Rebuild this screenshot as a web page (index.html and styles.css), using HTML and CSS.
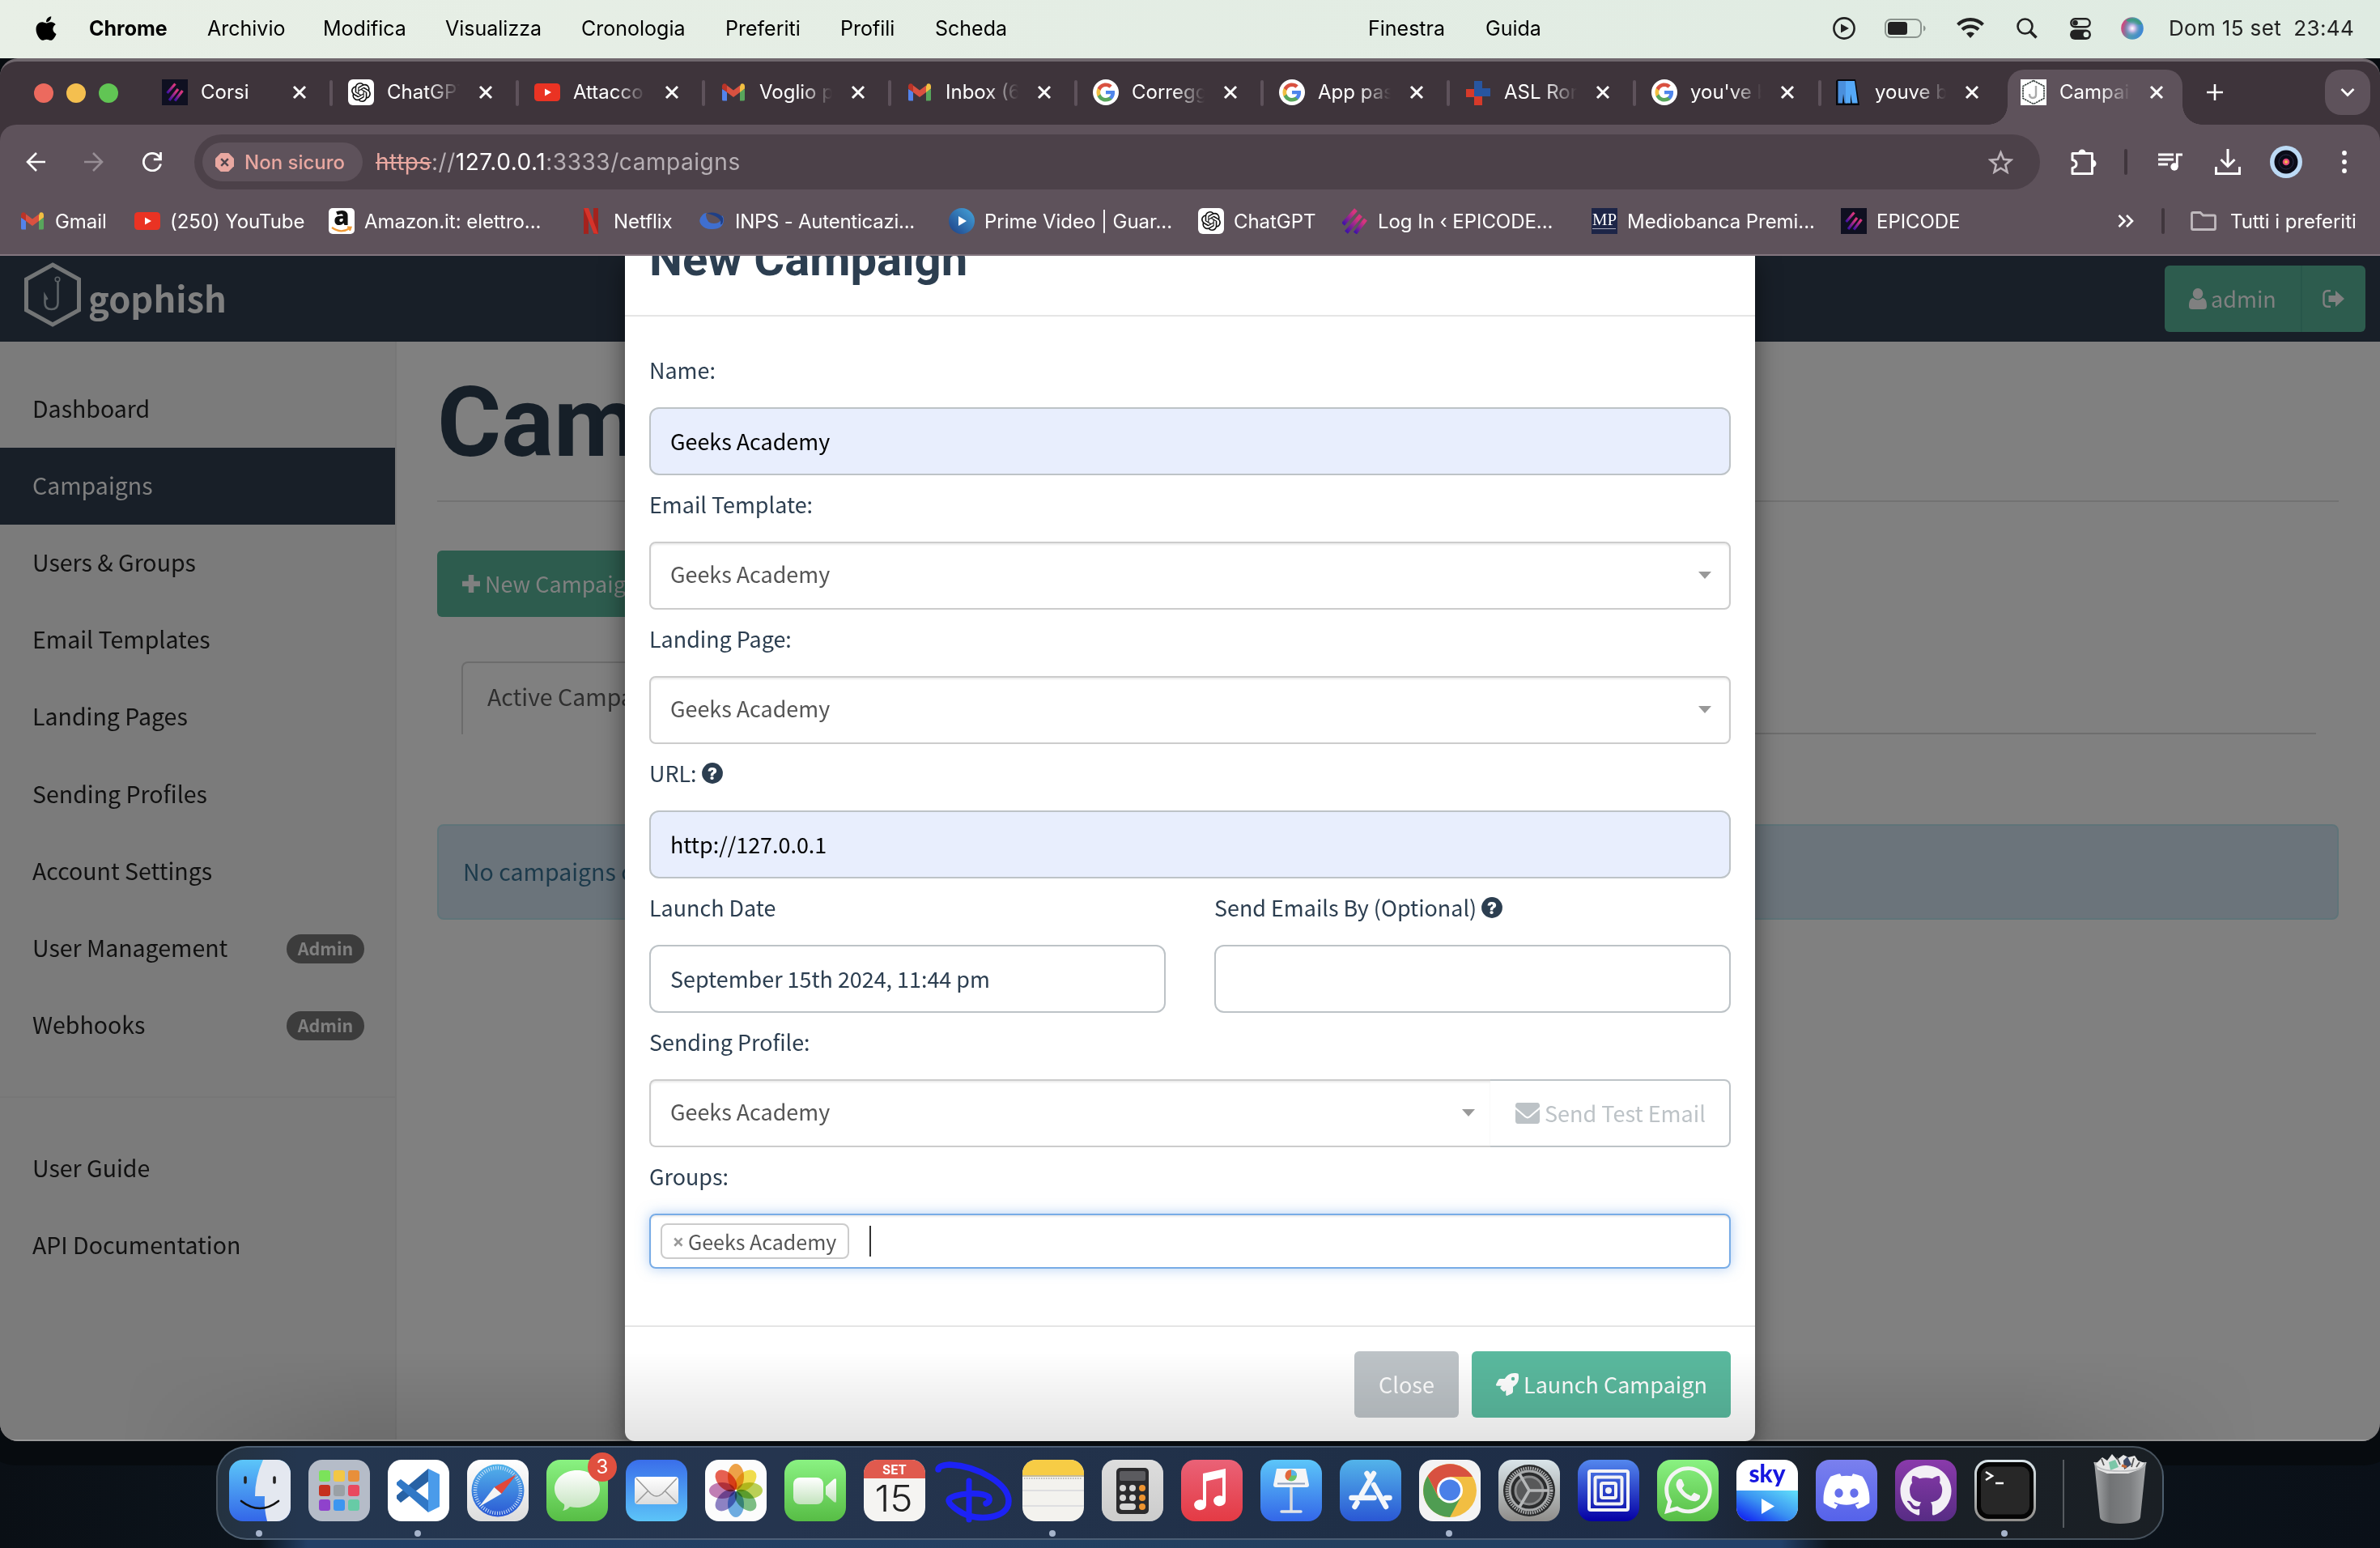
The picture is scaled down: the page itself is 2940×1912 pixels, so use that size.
FILE: index.html
```html
<!DOCTYPE html>
<html lang="it">
<head>
<meta charset="utf-8">
<title>Campaigns - Gophish</title>
<link rel="stylesheet" href="styles.css">
</head>
<body>
<svg class="defs" width="0" height="0" aria-hidden="true">
  <defs>
    <linearGradient id="epi" x1="1" y1="0" x2="0" y2="1"><stop offset=".2" stop-color="#d6357e"/><stop offset="1" stop-color="#3a10a8"/></linearGradient>
    <linearGradient id="green" x1="0" y1="0" x2="0" y2="1"><stop offset="0" stop-color="#8af282"/><stop offset="1" stop-color="#57bd45"/></linearGradient>
    <linearGradient id="blueUp" x1="0" y1="0" x2="0" y2="1"><stop offset="0" stop-color="#3a6eea"/><stop offset="1" stop-color="#5cc4f8"/></linearGradient>
    <linearGradient id="blueDown" x1="0" y1="0" x2="0" y2="1"><stop offset="0" stop-color="#5cc6f9"/><stop offset="1" stop-color="#3366e8"/></linearGradient>
    <linearGradient id="store" x1="0" y1="0" x2="0" y2="1"><stop offset="0" stop-color="#53b4ea"/><stop offset="1" stop-color="#2a57d4"/></linearGradient>
    <linearGradient id="red" x1="0" y1="0" x2="0" y2="1"><stop offset="0" stop-color="#ea6277"/><stop offset="1" stop-color="#e43a44"/></linearGradient>
    <linearGradient id="white" x1="0" y1="0" x2="0" y2="1"><stop offset="0" stop-color="#fff"/><stop offset="1" stop-color="#dcdcdc"/></linearGradient>
    <linearGradient id="glass" x1="0" y1="0" x2="0" y2="1"><stop offset="0" stop-color="#fff"/><stop offset="1" stop-color="#c3e3bd"/></linearGradient>
    <linearGradient id="navy" x1="0" y1="0" x2="0" y2="1"><stop offset="0" stop-color="#5488ee"/><stop offset="1" stop-color="#0500a4"/></linearGradient>
    <linearGradient id="steel" x1="0" y1="0" x2="0" y2="1"><stop offset="0" stop-color="#dae5ea"/><stop offset="1" stop-color="#8f8d8a"/></linearGradient>
    <linearGradient id="purple" x1="0" y1="0" x2="0" y2="1"><stop offset="0" stop-color="#8a3aab"/><stop offset="1" stop-color="#572c84"/></linearGradient>
    <linearGradient id="discord" x1="0" y1="0" x2="0" y2="1"><stop offset="0" stop-color="#7a80ee"/><stop offset="1" stop-color="#5562ea"/></linearGradient>
    <linearGradient id="skyg" x1="1" y1="0" x2="0" y2="1"><stop offset="0" stop-color="#62e2fa"/><stop offset=".5" stop-color="#3a92f2"/><stop offset="1" stop-color="#0a10f0"/></linearGradient>
    <linearGradient id="can" x1="0" y1="0" x2="1" y2="0"><stop offset="0" stop-color="#a5a7a9"/><stop offset=".3" stop-color="#717375"/><stop offset=".7" stop-color="#7e8082"/><stop offset="1" stop-color="#a2a4a6"/></linearGradient>
    <radialGradient id="siri"><stop offset="0" stop-color="#fff"/><stop offset=".35" stop-color="#c8b8e6"/><stop offset="1" stop-color="#3a8fb8" stop-opacity="0"/></radialGradient>
    <linearGradient id="siriBase" x1="0" y1=".3" x2="1" y2=".6"><stop offset="0" stop-color="#e23a78"/><stop offset=".5" stop-color="#4f9cb0"/><stop offset="1" stop-color="#3f86d8"/></linearGradient>
    <linearGradient id="prime" x1="1" y1="0" x2="0" y2="1"><stop offset="0" stop-color="#46a6dc"/><stop offset="1" stop-color="#1c3f86"/></linearGradient>
  </defs>
  <symbol id="i-x" viewBox="0 0 18 18"><path d="M2 2l14 14M16 2L2 16" stroke="#fff" stroke-width="3" fill="none"/></symbol>
  <symbol id="i-bars" viewBox="0 0 32 32"><g stroke="url(#epi)" stroke-width="3.2"><path d="M6.500 17L16.500 5.500"/><path d="M9 26L20 12"/><path d="M16 26.500L25.500 14"/></g></symbol>
  <symbol id="i-epi" viewBox="0 0 32 32"><path fill="#0f1021" d="M0 0h32v32H0z"/><use href="#i-bars" width="32" height="32"/></symbol>
  <symbol id="i-gpt" viewBox="0 0 32 32"><rect width="32" height="32" rx="6" fill="#fff"/><path transform="translate(4 4)" fill="#111" d="M22.2819 9.8211a5.9847 5.9847 0 0 0-.5157-4.9108 6.0462 6.0462 0 0 0-6.5098-2.9A6.0651 6.0651 0 0 0 4.9807 4.1818a5.9847 5.9847 0 0 0-3.9977 2.9 6.0462 6.0462 0 0 0 .7427 7.0966 5.98 5.98 0 0 0 .511 4.9107 6.051 6.051 0 0 0 6.5146 2.9001A5.9847 5.9847 0 0 0 13.2599 24a6.0557 6.0557 0 0 0 5.7718-4.2058 5.9894 5.9894 0 0 0 3.9977-2.9001 6.0557 6.0557 0 0 0-.7475-7.0729zm-9.022 12.6081a4.4755 4.4755 0 0 1-2.8764-1.0408l.1419-.0804 4.7783-2.7582a.7948.7948 0 0 0 .3927-.6813v-6.7369l2.02 1.1686a.071.071 0 0 1 .038.052v5.5826a4.504 4.504 0 0 1-4.4945 4.4944zm-9.6607-4.1254a4.4708 4.4708 0 0 1-.5346-3.0137l.142.0852 4.783 2.7582a.7712.7712 0 0 0 .7806 0l5.8428-3.3685v2.3324a.0804.0804 0 0 1-.0332.0615L9.74 19.9502a4.4992 4.4992 0 0 1-6.1408-1.6464zM2.3408 7.8956a4.485 4.485 0 0 1 2.3655-1.9728V11.6a.7664.7664 0 0 0 .3879.6765l5.8144 3.3543-2.0201 1.1685a.0757.0757 0 0 1-.071 0l-4.8303-2.7865A4.504 4.504 0 0 1 2.3408 7.872zm16.5963 3.8558L13.1038 8.364 15.1192 7.2a.0757.0757 0 0 1 .071 0l4.8303 2.7913a4.4944 4.4944 0 0 1-.6765 8.1042v-5.6772a.79.79 0 0 0-.407-.667zm2.0107-3.0231l-.142-.0852-4.7735-2.7818a.7759.7759 0 0 0-.7854 0L9.409 9.2297V6.8974a.0662.0662 0 0 1 .0284-.0615l4.8303-2.7866a4.4992 4.4992 0 0 1 6.6802 4.66zM8.3065 12.863l-2.02-1.1638a.0804.0804 0 0 1-.038-.0567V6.0742a4.4992 4.4992 0 0 1 7.3757-3.4537l-.142.0805L8.704 5.459a.7948.7948 0 0 0-.3927.6813zm1.0976-2.3654l2.602-1.4998 2.6069 1.4998v2.9994l-2.5974 1.4997-2.6067-1.4997Z"/></symbol>
  <symbol id="i-yt" viewBox="0 0 32 32"><rect y="5" width="32" height="22" rx="4.500" fill="#ea3323"/><path d="M13 11.500l8 4.500-8 4.500z" fill="#fff"/></symbol>
  <symbol id="i-gmail" viewBox="0 0 32 32"><path fill="#5383ec" d="M2 12v13a1.500 1.500 0 0 0 1.500 1.500H8V15z"/><path fill="#58a65c" d="M30 12v13a1.500 1.500 0 0 1-1.500 1.500H24V15z"/><path fill="#f2bf42" d="M24 9v7l6-4.500V8.500c0-3-3-4.200-5-2.600z"/><path fill="#d95140" d="M8 16V7.500l8 6 8-6V16l-8 6z"/><path fill="#b93428" d="M2 8.500v3L8 16V7.500L7 5.900C5 4.300 2 5.500 2 8.500z"/></symbol>
  <symbol id="i-google" viewBox="0 0 32 32"><circle cx="16" cy="16" r="16" fill="#fff"/><g transform="translate(3.400 3.400) scale(1.050)"><path fill="#4f86ec" d="M22.56 12.25c0-.78-.07-1.53-.2-2.25H12v4.26h5.92c-.26 1.37-1.04 2.53-2.21 3.31v2.77h3.57c2.08-1.92 3.28-4.74 3.28-8.09z"/><path fill="#58a65c" d="M12 23c2.97 0 5.46-.98 7.28-2.66l-3.57-2.77c-.98.66-2.23 1.06-3.71 1.06-2.86 0-5.29-1.93-6.16-4.53H2.18v2.84C3.99 20.53 7.7 23 12 23z"/><path fill="#f2bf42" d="M5.84 14.09c-.22-.66-.35-1.36-.35-2.09s.13-1.43.35-2.09V7.07H2.18C1.43 8.55 1 10.22 1 12s.43 3.45 1.18 4.93l2.85-2.22.81-.62z"/><path fill="#d95140" d="M12 5.38c1.62 0 3.06.56 4.21 1.64l3.15-3.15C17.45 2.09 14.97 1 12 1 7.700 1 3.990 3.470 2.180 7.070l3.660 2.840c.87-2.600 3.300-4.530 6.160-4.530z"/></g></symbol>
  <symbol id="i-help" viewBox="0 0 26 26"><circle cx="13" cy="13" r="12.900" fill="#2c3e50"/><text x="13" y="20.500" text-anchor="middle" font-family="Inter, sans-serif" font-weight="900" font-size="20" fill="#fff">?</text></symbol>
</svg>

<header class="menubar">
  <nav class="menus">
    <svg class="apple" viewBox="0 0 384 512"><path d="M318.7 268.7c-.2-36.7 16.4-64.4 50-84.8-18.8-26.9-47.2-41.7-84.7-44.6-35.5-2.8-74.3 20.7-88.5 20.7-15 0-49.4-19.7-76.4-19.7C63.3 141.200 4 184.800 4 273.500q0 39.300 14.400 81.200c12.800 36.700 59 126.700 107.200 125.200 25.200-.6 43-17.900 75.800-17.900 31.800 0 48.300 17.900 76.400 17.900 48.600-.7 90.400-82.500 102.600-119.300-65.200-30.700-61.700-90-61.700-91.900zm-56.600-164.200c27.300-32.400 24.800-61.900 24-72.500-24.100 1.400-52 16.400-67.900 34.900-17.500 19.800-27.800 44.300-25.600 71.900 26.100 2 49.900-11.400 69.500-34.300z"/></svg>
    <span class="app-name">Chrome</span><span>Archivio</span><span>Modifica</span><span>Visualizza</span><span>Cronologia</span><span>Preferiti</span><span>Profili</span><span>Scheda</span><span>Finestra</span><span>Guida</span>
  </nav>
  <div class="status">
    <svg viewBox="0 0 28 28" width="28" height="28"><circle cx="14" cy="14" r="12.600" fill="none" stroke="#222" stroke-width="2.600"/><path d="M10 8.500L20 14l-10 5.500z" fill="#222"/></svg>
    <svg viewBox="0 0 52 24" width="52" height="24"><rect x="1" y="1" width="44" height="22" rx="6.500" fill="none" stroke="#8b948e" stroke-width="2"/><rect x="4" y="4" width="24" height="16" rx="3.500" fill="#222"/><path d="M48 8.500c3.500 1 3.500 6 0 7z" fill="#8b948e"/></svg>
    <svg viewBox="0 0 34 26" width="34" height="26" fill="none" stroke="#222"><path d="M1.500 8.500a22 22 0 0 1 31 0" stroke-width="4.200"/><path d="M7 14.600a14.500 14.500 0 0 1 20 0" stroke-width="4.200"/><path d="M17 25l-5-5.500a7.500 7.500 0 0 1 10 0z" fill="#222" stroke="none"/></svg>
    <svg viewBox="0 0 26 26" width="26" height="26" fill="none" stroke="#222"><circle cx="10.500" cy="10.500" r="9" stroke-width="2.600"/><path d="M17 17l7.500 7.500" stroke-width="3.600"/></svg>
    <svg viewBox="0 0 26 27" width="26" height="27"><rect x="1.300" y="1.300" width="23.400" height="10" rx="5" fill="none" stroke="#222" stroke-width="2.400"/><circle cx="6.500" cy="6.300" r="3.300" fill="#222"/><rect y="14.500" width="26" height="12.500" rx="6.200" fill="#222"/><circle cx="20" cy="20.700" r="3.400" fill="#dfebe2"/></svg>
    <svg viewBox="0 0 28 28" width="28" height="28"><circle cx="14" cy="14" r="13.800" fill="url(#siriBase)"/><path d="M6 4a13.800 13.800 0 0 1 20 5q-10 2-20-5z" fill="#3f9a80"/><circle cx="14" cy="14" r="11" fill="url(#siri)"/></svg>
    <span class="clock">Dom 15 set&nbsp; 23:44</span>
  </div>
</header>

<main class="window">
  <div class="tabstrip">
    <div class="lights"><i class="red"></i><i class="amber"></i><i class="lime"></i></div>
    <div class="tabs">
      <div class="tab"><svg><use href="#i-epi"/></svg><span>Corsi</span><svg class="x"><use href="#i-x"/></svg></div>
      <div class="tab"><svg><use href="#i-gpt"/></svg><span>ChatGPT</span><svg class="x"><use href="#i-x"/></svg></div>
      <div class="tab"><svg><use href="#i-yt"/></svg><span>Attacco d</span><svg class="x"><use href="#i-x"/></svg></div>
      <div class="tab"><svg><use href="#i-gmail"/></svg><span>Voglio pr</span><svg class="x"><use href="#i-x"/></svg></div>
      <div class="tab"><svg><use href="#i-gmail"/></svg><span>Inbox (65)</span><svg class="x"><use href="#i-x"/></svg></div>
      <div class="tab"><svg><use href="#i-google"/></svg><span>Correggi</span><svg class="x"><use href="#i-x"/></svg></div>
      <div class="tab"><svg><use href="#i-google"/></svg><span>App pass</span><svg class="x"><use href="#i-x"/></svg></div>
      <div class="tab"><svg viewBox="0 0 32 32"><path d="M11 2h10v9h10v10H11z" fill="#2856a0"/><path d="M1 12h10v9h10v11H11v-10H1z" fill="#d63a2a"/></svg><span>ASL Roma</span><svg class="x"><use href="#i-x"/></svg></div>
      <div class="tab narrow"><svg><use href="#i-google"/></svg><span>you've be</span><svg class="x"><use href="#i-x"/></svg></div>
      <div class="tab narrow last"><svg viewBox="0 0 32 32"><path d="M2 0h22l5 32H0V2z" fill="#07080c"/><path d="M2.500 2h11v27.500h-3L9 18 8 29.500H2.500z" fill="#4a8fdc"/><path d="M12 2h11l3.800 27.500h-7L18 18v11.500h-6z" fill="#55a9f8"/></svg><span>youve be</span><svg class="x"><use href="#i-x"/></svg></div>
      <div class="tab active"><svg viewBox="0 0 32 32"><path d="M0 0h32v32H0z" fill="#fff"/><path d="M16 1.500L29 8.500v15L16 30.500 3 23.500v-15z" fill="none" stroke="#333c3a" stroke-width="1.600" stroke-dasharray="2.500 .7"/><path d="M19 8v11q0 4-4 4t-4-5" fill="none" stroke="#aaa" stroke-width="2.400"/></svg><span>Campaigns</span><svg class="x"><use href="#i-x"/></svg></div>
    </div>
    <svg class="plus" viewBox="0 0 22 22"><path d="M11 1v20M1 11h20" stroke="#fff" stroke-width="2.600"/></svg>
    <div class="tab-search"><svg viewBox="0 0 18 12" width="18" height="12"><path d="M1.500 2L9 9.500 16.500 2" fill="none" stroke="#fff" stroke-width="2.800"/></svg></div>
  </div>

  <div class="toolbar">
    <svg class="tb" viewBox="0 0 24 24"><path d="M24 12H2M13 1L2 12l11 11" fill="none" stroke="#fff" stroke-width="2.600"/></svg>
    <svg class="tb" viewBox="0 0 24 24"><path d="M0 12h22M11 1l11 11-11 11" fill="none" stroke="#978e95" stroke-width="2.600"/></svg>
    <svg class="tb" viewBox="0 0 24 24"><path d="M22.500 14.500a10.700 10.700 0 1 1-2.200-9.300l1.700 2.300" fill="none" stroke="#fff" stroke-width="2.800"/><path d="M22.500 0v8.800h-8.700" fill="none" stroke="#fff" stroke-width="2.800"/></svg>
    <div class="omnibox">
      <div class="chip"><svg viewBox="0 0 24 24" width="23" height="23"><path d="M7 0h10l7 7v10l-7 7H7l-7-7V7z" fill="#e9a8a1"/><path d="M7.500 7.500l9 9M16.500 7.500l-9 9" stroke="#51464e" stroke-width="2.600"/></svg><span>Non sicuro</span></div>
      <div class="url"><s>https</s>://<b>127.0.0.1</b>:3333/campaigns</div>
      <svg class="star" viewBox="0 0 32 30"><path d="M16 3l3.700 8.700 9.500.8-7.200 6.200 2.200 9.300-8.200-5-8.200 5 2.200-9.300-7.200-6.200 9.500-.8z" fill="none" stroke="#bbb3b9" stroke-width="2.700"/></svg>
    </div>
    <div class="actions">
      <svg viewBox="0 0 32 32" width="32" height="32"><path d="M2 5.500h24.500v25H2v-7q5-1 5-5t-5-5z" fill="none" stroke="#fff" stroke-width="3" stroke-linejoin="round"/><path d="M9.500 5a4.500 4.500 0 0 1 9 0zM27 13.500a4.500 4.500 0 0 1 0 9z" fill="#fff"/></svg>
      <i class="vr"></i>
      <svg viewBox="0 0 30 24" width="30" height="24"><path d="M0 3h19M0 9h19M0 15h12" stroke="#fff" stroke-width="2.800"/><path d="M23.300 18V3H30" fill="none" stroke="#fff" stroke-width="2.800"/><circle cx="20" cy="18" r="4.700" fill="#fff"/></svg>
      <svg viewBox="0 0 32 32" width="32" height="32"><path d="M16 0v21M7.500 13l8.500 8.500L24.500 13M1.500 22v8.500h29V22" fill="none" stroke="#fff" stroke-width="3"/></svg>
      <svg viewBox="0 0 40 40" width="40" height="40"><circle cx="20" cy="20" r="20" fill="#bcdaf5"/><circle cx="20" cy="20" r="14.500" fill="#0b0c18"/><circle cx="20" cy="20" r="9" fill="none" stroke="#2a2f48"/><circle cx="20" cy="20" r="4.300" fill="#e2477a"/><circle cx="20" cy="20" r="2" fill="#f2b84a"/></svg>
      <svg viewBox="0 0 6 28" width="6" height="28" fill="#fff"><circle cx="3" cy="3" r="2.900"/><circle cx="3" cy="14" r="2.900"/><circle cx="3" cy="25" r="2.900"/></svg>
    </div>
  </div>

  <div class="bookmarks">
    <a><svg><use href="#i-gmail"/></svg>Gmail</a>
    <a><svg><use href="#i-yt"/></svg>(250) YouTube</a>
    <a><svg viewBox="0 0 32 32"><rect width="32" height="32" rx="5" fill="#fff"/><text x="16" y="20.500" text-anchor="middle" font-family="Open Sans, sans-serif" font-weight="800" font-size="31" fill="#111">a</text><path d="M4 24q11 8 22 1M23 23.500l4.500.3-1.500 4" fill="none" stroke="#f09a35" stroke-width="2.200"/></svg>Amazon.it: elettro...</a>
    <a><svg viewBox="0 0 32 32"><path d="M7 0h6v32q-3-.5-6 0zM19 0h6v32q-3-.5-6 0z" fill="#a4221d"/><path d="M7 0h6l12 32q-3-.6-5.500-.5z" fill="#d6332a"/></svg>Netflix</a>
    <a class="tight"><svg viewBox="0 0 32 32"><path d="M3 9.500A14.500 10.500 0 0 0 16 26q14 0 14-12 0-3-2-5l-1 2q0 8-9 8T8 9q0-2 1-3-4 0-6 3.500z" fill="#3f6fd0"/><path d="M9 6.500q10-3 18 3 4 4 1 10l-2 1q3-9-17-14z" fill="#1f3f86"/></svg>INPS - Autenticazi...</a>
    <a><svg viewBox="0 0 32 32"><circle cx="16" cy="16" r="16" fill="url(#prime)"/><path d="M12 10l10 6-10 6z" fill="#fff"/></svg>Prime Video | Guar...</a>
    <a><svg><use href="#i-gpt"/></svg>ChatGPT</a>
    <a><svg viewBox="0 0 32 32"><g stroke="url(#epi)" stroke-width="5"><path d="M1 20L17 2"/><path d="M5 30L23 9"/><path d="M16 31L29 14"/></g></svg>Log In ‹ EPICODE...</a>
    <a><svg viewBox="0 0 32 32"><path d="M0 0h32v32H0z" fill="#1d2547"/><text x="16" y="21" text-anchor="middle" font-family="Liberation Serif, serif" font-size="20" fill="#fff" textLength="30" lengthAdjust="spacingAndGlyphs">MP</text><path d="M1 25.500h29" stroke="#aab" stroke-width="1"/></svg>Mediobanca Premi...</a>
    <a><svg><use href="#i-epi"/></svg>EPICODE</a>
    <svg class="more" viewBox="0 0 20 16"><path d="M1.500 1l7 7-7 7M11 1l7 7-7 7" fill="none" stroke="#fff" stroke-width="2.600"/></svg>
    <i class="vr"></i>
    <a><svg viewBox="0 0 32 32"><path d="M1.500 7q0-1.500 1.500-1.500h9l3.500 3.500H29q1.500 0 1.500 1.500V25q0 1.500-1.500 1.500H3q-1.500 0-1.500-1.500z" fill="none" stroke="#c0babe" stroke-width="2.800"/></svg>Tutti i preferiti</a>
  </div>

  <section class="page">
    <div class="navbar">
      <div class="brand">
        <svg viewBox="0 0 70 80" width="70" height="80" fill="none"><path d="M35 3L67.500 21v38L35 77 2.500 59V21z" stroke="#737576" stroke-width="5"/><circle cx="41" cy="21" r="2.800" stroke="#5d6367" stroke-width="1.600"/><path d="M41.500 24v26q0 8-8 8t-8-8V41l3 5" stroke="#5d6367" stroke-width="2.600"/></svg>
        <span>gophish</span>
      </div>
      <div class="account">
        <div class="btn-user"><svg viewBox="0 0 22 26" width="22" height="26"><path d="M11 0a6.300 6.800 0 0 1 0 13.600A6.300 6.800 0 0 1 11 0zM5 12q6 5 12 0c4 1 5 5 5 10 0 3-1.500 4-4 4H4c-2.500 0-4-1-4-4 0-5 1-9 5-10z" fill="#808080"/></svg>admin</div>
        <div class="btn-out"><svg viewBox="0 0 27 22" width="27" height="22"><path d="M10 1.300H6A4.500 4.500 0 0 0 1.500 6v10A4.500 4.500 0 0 0 6 20.700h4" fill="none" stroke="#808080" stroke-width="2.400"/><path d="M16 1l11 10-11 10v-6H7.500V7H16z" fill="#808080"/></svg></div>
      </div>
    </div>
    <div class="body">
      <aside class="sidebar">
        <a>Dashboard</a><a class="on">Campaigns</a><a>Users &amp; Groups</a><a>Email Templates</a><a>Landing Pages</a><a>Sending Profiles</a><a>Account Settings</a><a>User Management<b>Admin</b></a><a>Webhooks<b>Admin</b></a>
        <hr>
        <a>User Guide</a><a>API Documentation</a>
      </aside>
      <div class="content">
        <h1>Campaigns</h1>
        <div class="new-btn"><svg viewBox="0 0 24 24" width="24" height="24"><path d="M12 1v22M1 12h22" stroke="#808080" stroke-width="6.500"/></svg>New Campaign</div>
        <div class="nav-tabs"><span>Active Campaigns</span></div>
        <div class="alert">No campaigns created yet. Let's create one!</div>
      </div>
    </div>

    <div class="modal">
      <h4>New Campaign</h4>
      <form class="form">
        <label>Name:</label>
        <div class="input filled">Geeks Academy</div>
        <label>Email Template:</label>
        <div class="input select">Geeks Academy<i class="caret"></i></div>
        <label>Landing Page:</label>
        <div class="input select">Geeks Academy<i class="caret"></i></div>
        <label>URL: <svg><use href="#i-help"/></svg></label>
        <div class="input filled">http://127.0.0.1</div>
        <div class="cols">
          <div><label>Launch Date</label><div class="input">September 15th 2024, 11:44 pm</div></div>
          <div><label>Send Emails By (Optional) <svg><use href="#i-help"/></svg></label><div class="input"></div></div>
        </div>
        <label>Sending Profile:</label>
        <div class="group">
          <div class="input select joined">Geeks Academy<i class="caret"></i></div>
          <div class="test"><svg viewBox="0 64 512 384" width="30" height="26" preserveAspectRatio="none"><path fill="#bdc3c7" d="M502.3 190.8c3.9-3.1 9.7-.2 9.7 4.7V400c0 26.500-21.500 48-48 48H48c-26.500 0-48-21.500-48-48V195.600c0-5 5.700-7.800 9.700-4.700 22.400 17.400 52.100 39.500 154.100 113.600 21.100 15.400 56.700 47.800 92.200 47.600 35.700.3 72-32.800 92.300-47.600 102-74.100 131.600-96.300 154-113.700zM256 320c23.200.4 56.600-29.200 73.400-41.400 132.700-96.300 142.800-104.700 173.400-128.700 5.800-4.500 9.200-11.500 9.200-18.900v-19c0-26.500-21.500-48-48-48H48c-26.500 0-48 21.500-48 48v19c0 7.400 3.400 14.300 9.200 18.900 30.600 23.900 40.700 32.400 173.400 128.700 16.800 12.200 50.200 41.800 73.400 41.400z"/></svg>Send Test Email</div>
        </div>
        <label>Groups:</label>
        <div class="multi"><span class="tag"><b>×</b>Geeks Academy</span><i class="cursor"></i></div>
      </form>
      <div class="footer">
        <div class="close">Close</div>
        <div class="launch"><svg viewBox="0 0 512 512" width="28" height="28"><path fill="#fff" d="M505.120 19.094c-1.189-5.531-6.658-11-12.207-12.188C460.716 0 435.507 0 410.407 0 307.175 0 245.269 55.203 199.052 128H94.838c-16.348.016-35.557 11.875-42.887 26.484L2.516 253.297A28.400 28.400 0 0 0 0 264a24 24 0 0 0 24 24h103.816l-22.474 22.469c-11.365 11.361-12.996 32.258 0 45.250l50.904 50.906c11.156 11.188 32.156 13.156 45.277 0l22.475-22.469V488a24 24 0 0 0 24 24 28.560 28.560 0 0 0 10.707-2.516l98.728-49.391c14.629-7.297 26.508-26.500 26.508-42.859V312.797c72.598-46.313 128.035-108.406 128.035-211.094C512.075 76.500 512.075 51.297 505.120 19.094ZM384.040 168A40 40 0 1 1 424.050 128 40 40 0 0 1 384.040 168Z"/></svg>Launch Campaign</div>
      </div>
    </div>
    <div class="dock-shade"></div>
  </section>
</main>

<footer class="desk">
  <div class="dock">
    <div class="app run"><svg viewBox="0 0 76 76"><rect width="76" height="76" rx="17" fill="url(#blueDown)"/><path d="M42 0Q32 22 32 45h12q-1 16 3 31h12a17 17 0 0 0 17-17V17A17 17 0 0 0 59 0z" fill="#e4e8f0"/><path d="M20 22v6M56 22v6" stroke="#222" stroke-width="3.600" stroke-linecap="round"/><path d="M15 51q23 18 46 0" fill="none" stroke="#111" stroke-width="2.600" stroke-linecap="round"/></svg></div>
    <div class="app"><svg viewBox="0 0 76 76"><rect width="76" height="76" rx="17" fill="#b5bcc8"/><g><rect x="13" y="13" width="14" height="14" rx="3" fill="#7be35a"/><rect x="31" y="13" width="14" height="14" rx="3" fill="#f3c745"/><rect x="49" y="13" width="14" height="14" rx="3" fill="#e88f3a"/><rect x="13" y="31" width="14" height="14" rx="3" fill="#c5301f"/><rect x="31" y="31" width="14" height="14" rx="3" fill="#9aa0a5"/><rect x="49" y="31" width="14" height="14" rx="3" fill="#e9495f"/><rect x="13" y="49" width="14" height="14" rx="3" fill="#8f42cc"/><rect x="31" y="49" width="14" height="14" rx="3" fill="#3c96f0"/><rect x="49" y="49" width="14" height="14" rx="3" fill="#67cba6"/></g></svg></div>
    <div class="app run"><svg viewBox="0 0 76 76"><rect width="76" height="76" rx="17" fill="#fff"/><path d="M50 11v16L16 53l-5-5v-4z" fill="#2862a5"/><path d="M16 24l34 26v15L11 31v-3z" fill="#3178c6"/><path d="M50 11l14 7v40l-14 7z" fill="#4a9bea"/></svg></div>
    <div class="app"><svg viewBox="0 0 76 76"><rect width="76" height="76" rx="17" fill="url(#white)"/><circle cx="38" cy="38" r="32.500" fill="url(#store)"/><circle cx="38" cy="38" r="28" fill="none" stroke="#cfe4f8" stroke-width="4.500" stroke-dasharray="1 1.930"/><path d="M61 18L33.500 34l9 8z" fill="#e1483a"/><path d="M15 58l18.500-24 9 8z" fill="#f4f4f4"/></svg></div>
    <div class="app"><svg viewBox="0 0 76 76"><rect width="76" height="76" rx="17" fill="url(#green)"/><path d="M38 13c16 0 28 10 28 23S54 59 38 59q-5 0-9-1-3 4-9 5 3-4 2-8C14 50 10 43 10 36c0-13 12-23 28-23z" fill="url(#glass)"/></svg><em>3</em></div>
    <div class="app"><svg viewBox="0 0 76 76"><rect width="76" height="76" rx="17" fill="url(#blueUp)"/><rect x="11" y="21" width="54" height="34" rx="4" fill="url(#white)"/><path d="M13 53l15-15M63 53L48 38M13 23l18 19q7 6 14 0l18-19" fill="none" stroke="#999" stroke-width="1.500"/></svg></div>
    <div class="app"><svg viewBox="0 0 76 76"><rect width="76" height="76" rx="17" fill="#fcfcfc"/><g class="petals"><ellipse cx="38" cy="21" rx="10" ry="16" fill="#ef9a35"/><ellipse cx="38" cy="21" rx="10" ry="16" fill="#f2dc3a" transform="rotate(45 38 38)"/><ellipse cx="38" cy="21" rx="10" ry="16" fill="#b5cf45" transform="rotate(90 38 38)"/><ellipse cx="38" cy="21" rx="10" ry="16" fill="#6fb878" transform="rotate(135 38 38)"/><ellipse cx="38" cy="21" rx="10" ry="16" fill="#5fa5e0" transform="rotate(180 38 38)"/><ellipse cx="38" cy="21" rx="10" ry="16" fill="#8376c0" transform="rotate(225 38 38)"/><ellipse cx="38" cy="21" rx="10" ry="16" fill="#bd72ae" transform="rotate(270 38 38)"/><ellipse cx="38" cy="21" rx="10" ry="16" fill="#e7503f" transform="rotate(315 38 38)"/></g></svg></div>
    <div class="app"><svg viewBox="0 0 76 76"><rect width="76" height="76" rx="17" fill="url(#green)"/><rect x="11" y="22" width="37" height="33" rx="8" fill="url(#glass)"/><path d="M51 33l10-9q3-2 3 1v26q0 3-3 1l-10-9z" fill="url(#glass)"/></svg></div>
    <div class="app"><svg viewBox="0 0 76 76"><rect width="76" height="76" rx="17" fill="#f5f4f2"/><path d="M0 23v-6A17 17 0 0 1 17 0h42a17 17 0 0 1 17 17v6z" fill="#e05a4e"/><text x="38" y="18" text-anchor="middle" font-family="Inter, sans-serif" font-weight="700" font-size="15.500" fill="#fff">SET</text><text x="37" y="64" text-anchor="middle" font-family="Inter, sans-serif" font-weight="300" font-size="45" fill="#222" textLength="47" lengthAdjust="spacingAndGlyphs">15</text></svg></div>
    <div class="app"><svg viewBox="0 0 76 76"><g fill="none" stroke="#1c22f5" stroke-linecap="round"><path d="M-6 12Q-6 7 8 6c36 2 73 24 73 45 0 22-38 25-57 15Q7 56 7 50c1-9 50-12 50-2q1 4-4 6" stroke-width="7.500"/><path d="M32 26v48" stroke-width="7"/></g></svg></div>
    <div class="app run"><svg viewBox="0 0 76 76"><rect width="76" height="76" rx="17" fill="#f3f2ee"/><path d="M0 19v-2A17 17 0 0 1 17 0h42a17 17 0 0 1 17 17v2z" fill="#f7cc45"/><path d="M0 20h76" stroke="#b5a67a" stroke-width="1.500"/><path d="M2 23h72" stroke="#bbb" stroke-width="2" stroke-dasharray="1.500 1.500"/><path d="M0 38h76M0 57h76" stroke="#d8d7dc" stroke-width="1.600"/></svg></div>
    <div class="app"><svg viewBox="0 0 76 76"><rect width="76" height="76" rx="17" fill="url(#white)"/><rect width="76" height="76" rx="17" fill="#bbb" opacity=".5"/><rect x="18" y="10" width="40" height="57" rx="5" fill="#2b2b2e"/><rect x="22" y="14" width="32" height="12" rx="2" fill="#5b5b5f"/><g fill="#d6d6d6"><circle cx="26" cy="35" r="4"/><circle cx="38" cy="35" r="4"/><circle cx="26" cy="47" r="4"/><circle cx="38" cy="47" r="4"/><rect x="22" y="54" width="20" height="8" rx="4"/></g><g fill="#ee9430"><circle cx="50" cy="35" r="4"/><circle cx="50" cy="47" r="4"/><circle cx="50" cy="58" r="4"/></g></svg></div>
    <div class="app"><svg viewBox="0 0 76 76"><rect width="76" height="76" rx="17" fill="url(#red)"/><path d="M27 17l28-6v40a7.500 6.500 0 1 1-4-6V22l-20 4.500V56a7.500 6.500 0 1 1-4-6z" fill="#fff"/></svg></div>
    <div class="app"><svg viewBox="0 0 76 76"><rect width="76" height="76" rx="17" fill="url(#blueDown)"/><path d="M20 11h36l4 20q0 3-3 3H19q-3 0-3-3z" fill="#f4f5f6"/><path d="M21 29.500h34" stroke="#8fa2bd" stroke-width="2"/><circle cx="38" cy="19.500" r="7" fill="#6ac46a"/><path d="M38 19.500v-7a7 7 0 0 1 7 7z" fill="#58b3ea"/><path d="M38 19.500v-7a7 7 0 0 0-4 13z" fill="#e2683c"/><path d="M38 34v29" stroke="#d8dade" stroke-width="3.500"/><path d="M26 64h24" stroke="#e2e4e8" stroke-width="3.500" stroke-linecap="round"/></svg></div>
    <div class="app"><svg viewBox="0 0 76 76"><rect width="76" height="76" rx="17" fill="url(#store)"/><g stroke="#f4f7fa" stroke-width="6.500" stroke-linecap="round"><path d="M42 17L27 43M14.500 47h28M57 47h4.500"/><path d="M33.500 17l3 5M42 31l15 27M21.500 53l-3 5"/></g></svg></div>
    <div class="app run"><svg viewBox="0 0 76 76"><rect width="76" height="76" rx="17" fill="#f3f3f4"/><circle cx="38" cy="38" r="33" fill="#f2be42"/><path d="M10.500 20A33 33 0 0 1 66 21H38L24 46z" fill="#d85140"/><path d="M10.500 20A33 33 0 0 0 38 71l13-24-27 0z" fill="#4f9d52"/><circle cx="38" cy="37.500" r="16" fill="#fff"/><circle cx="38" cy="37.500" r="13" fill="#4a80e8"/></svg></div>
    <div class="app"><svg viewBox="0 0 76 76"><rect width="76" height="76" rx="17" fill="url(#steel)"/><circle cx="38" cy="38" r="32" fill="#2a2b2c"/><circle cx="38" cy="38" r="27.500" fill="none" stroke="#aeb0b1" stroke-width="4" stroke-dasharray="1.600 1.300"/><circle cx="38" cy="38" r="24" fill="none" stroke="#a8aaab" stroke-width="3"/><circle cx="38" cy="38" r="17" fill="#58595a" stroke="#8a8b8c" stroke-width="3"/><path d="M38 38h24M38 38L26 17.500M38 38L26 58.500" stroke="#b5b7b8" stroke-width="3.500"/></svg></div>
    <div class="app"><svg viewBox="0 0 76 76"><rect width="76" height="76" rx="17" fill="url(#navy)"/><g fill="none" stroke="#f3f3f6" stroke-width="4"><rect x="14" y="14" width="48" height="48" rx="2"/><rect x="21.500" y="21.500" width="33" height="33" rx="2"/><rect x="29" y="29" width="18" height="18" rx="2"/></g><circle cx="38" cy="38" r="4" fill="#f3f3f6"/></svg></div>
    <div class="app"><svg viewBox="0 0 76 76"><rect width="76" height="76" rx="17" fill="url(#green)"/><path transform="translate(9 4) scale(.1310)" fill="#f4f4f4" d="M380.900 97.100C339 55.100 283.200 32 223.900 32c-122.400 0-222 99.600-222 222 0 39.100 10.200 77.300 29.600 111L0 480l117.700-30.900c32.400 17.700 68.900 27 106.100 27h.1c122.300 0 224.100-99.600 224.100-222 0-59.300-25.200-115-67.100-157zm-157 341.600c-33.200 0-65.700-8.900-94-25.700l-6.700-4-69.800 18.300L72 359.200l-4.400-7c-18.500-29.400-28.200-63.300-28.200-98.200 0-101.700 82.800-184.500 184.600-184.500 49.300 0 95.600 19.200 130.400 54.100 34.800 34.900 56.200 81.200 56.100 130.500 0 101.800-84.900 184.600-186.600 184.600zm101.200-138.200c-5.500-2.800-32.800-16.200-37.900-18-5.100-1.900-8.800-2.800-12.500 2.800-3.700 5.600-14.300 18-17.600 21.800-3.200 3.700-6.500 4.200-12 1.400-32.600-16.300-54-29.100-75.500-66-5.700-9.800 5.700-9.100 16.300-30.300 1.800-3.700.9-6.900-.5-9.700-1.400-2.800-12.500-30.100-17.100-41.200-4.500-10.800-9.100-9.300-12.500-9.500-3.200-.2-6.900-.2-10.600-.2-3.700 0-9.700 1.400-14.800 6.900-5.100 5.600-19.400 19-19.400 46.300 0 27.300 19.900 53.700 22.600 57.400 2.800 3.700 39.100 59.700 94.800 83.800 35.200 15.200 49 16.500 66.600 13.900 10.700-1.600 32.800-13.400 37.400-26.400 4.600-13 4.600-24.100 3.200-26.400-1.300-2.500-5-3.900-10.500-6.600z"/></svg></div>
    <div class="app"><svg viewBox="0 0 76 76"><rect width="76" height="76" rx="17" fill="#fff"/><path d="M0 38h76v21a17 17 0 0 1-17 17H17A17 17 0 0 1 0 59z" fill="url(#skyg)"/><path d="M31 48l16 9.500L31 67z" fill="#fff"/><text x="38" y="28" text-anchor="middle" font-family="Lato, sans-serif" font-weight="900" font-size="31" fill="#1616e0" textLength="45" lengthAdjust="spacingAndGlyphs">sky</text></svg></div>
    <div class="app"><svg viewBox="0 0 76 76"><rect width="76" height="76" rx="17" fill="url(#discord)"/><path transform="translate(9.500 10.500) scale(3.560)" fill="#fff" d="M13.545 2.907a13.200 13.200 0 0 0-3.257-1.011.05.05 0 0 0-.052.025c-.141.25-.297.577-.406.833a12.200 12.200 0 0 0-3.658 0 8 8 0 0 0-.412-.833.05.05 0 0 0-.052-.025c-1.125.194-2.220.534-3.257 1.011a.04.04 0 0 0-.021.018C.356 6.024-.213 9.047.066 12.032q.003.022.021.037a13.300 13.300 0 0 0 3.995 2.020.05.05 0 0 0 .056-.019q.463-.63.818-1.329a.05.05 0 0 0-.01-.059l-.018-.011a9 9 0 0 1-1.248-.595.05.05 0 0 1-.02-.066l.015-.019q.127-.095.248-.195a.05.05 0 0 1 .051-.007c2.619 1.196 5.454 1.196 8.041 0a.05.05 0 0 1 .053.007q.121.1.248.195a.05.05 0 0 1-.004.085 8 8 0 0 1-1.249.594.05.05 0 0 0-.03.03.05.05 0 0 0 .003.041c.24.465.515.909.817 1.329a.05.05 0 0 0 .056.019 13.200 13.200 0 0 0 4.001-2.020.05.05 0 0 0 .021-.037c.334-3.451-.559-6.449-2.366-9.106a.03.03 0 0 0-.02-.019m-8.198 7.307c-.789 0-1.438-.724-1.438-1.612s.637-1.613 1.438-1.613c.807 0 1.450.73 1.438 1.613 0 .888-.637 1.612-1.438 1.612m5.316 0c-.788 0-1.438-.724-1.438-1.612s.637-1.613 1.438-1.613c.807 0 1.451.73 1.438 1.613 0 .888-.631 1.612-1.438 1.612"/></svg></div>
    <div class="app"><svg viewBox="0 0 76 76"><rect width="76" height="76" rx="17" fill="url(#purple)"/><path transform="translate(6.500 7) scale(3.940)" fill="#f2eff5" d="M8 0C3.580 0 0 3.580 0 8c0 3.540 2.290 6.530 5.470 7.590.4.07.55-.17.55-.38 0-.19-.01-.82-.01-1.490-2.010.37-2.530-.49-2.690-.94-.09-.23-.48-.94-.82-1.130-.28-.15-.68-.52-.01-.53.63-.01 1.080.58 1.230.82.72 1.210 1.870.87 2.330.66.07-.52.28-.87.51-1.070-1.780-.2-3.640-.89-3.640-3.950 0-.87.31-1.590.82-2.150-.08-.2-.36-1.020.08-2.120 0 0 .67-.21 2.200.82.64-.18 1.320-.27 2-.27s1.360.09 2 .27c1.530-1.040 2.200-.82 2.200-.82.44 1.100.16 1.920.08 2.120.51.56.82 1.270.82 2.150 0 3.070-1.870 3.750-3.650 3.950.29.25.54.73.54 1.480 0 1.070-.01 1.930-.01 2.200 0 .21.15.46.55.38A8.010 8.010 0 0 0 16 8c0-4.420-3.580-8-8-8"/></svg></div>
    <div class="app run"><svg viewBox="0 0 76 76"><rect width="76" height="76" rx="17" fill="url(#steel)"/><rect x="3" y="3" width="70" height="70" rx="14.500" fill="#050505"/><rect x="8" y="8.500" width="60" height="59" rx="10" fill="#272727"/><path d="M14 15l8 5-8 5M26 29h10" fill="none" stroke="#fff" stroke-width="2.600"/></svg></div>
    <i class="dock-sep"></i>
    <div class="app"><svg viewBox="0 0 76 84"><path d="M6 8h64l-7 68q-1 7-25 8-24-1-25-8z" fill="url(#can)"/><path d="M8 10l8-8 6 4 6-8 6 7 8-6 6 3 8-2 4 6 8 3-6 8-14 5H22L10 17z" fill="#e6e6e6"/><path d="M24 8l8-3 4 9-10 4z" fill="#7cc6a8"/><path d="M42 6l5-5 5 10-9 6z" fill="#3d4a66"/><path d="M15 4l3 8M55 3l-3 11M34 2l4 9M62 8l-4 6" stroke="#555" stroke-width="1.800"/><path d="M40 12l6 2" stroke="#c46a3a" stroke-width="3"/><path d="M6 8q2 11 32 11T70 8" fill="none" stroke="#b9bbbd" stroke-width="1.500"/></svg></div>
  </div>
</footer>
</body>
</html>
```
FILE: styles.css
```css
* { box-sizing: border-box; }
html, body { margin: 0; }
body {
  width: 2940px;
  height: 1912px;
  overflow: hidden;
  display: flex;
  flex-direction: column;
  font-family: Inter, sans-serif;
  background: linear-gradient(90deg, #0a0f15 0, #0c141c 320px, #223f66 380px, #23405f 1700px, #22406a 2200px, #0d151c 2260px, #0a1018 2940px);
}
i { display: block; }
svg { display: block; flex: none; }
.defs { position: absolute; }

/* macOS menu bar */
.menubar {
  position: relative;
  z-index: 1;
  height: 72px;
  flex: none;
  display: flex;
  justify-content: space-between;
  align-items: center;
  padding: 0 29px 2px 44px;
  background: linear-gradient(90deg, #e8efe6, #dfebe2);
  color: #000;
  font-size: 25px;
  line-height: 32px;
  white-space: nowrap;
}
.menus {
  display: grid;
  align-items: center;
  grid-template-columns: 66px 146px 143px 151px 168px 178px 142px 117px 535px 145px 80px;
}
.apple { width: 26px; height: 34px; }
.app-name { font-weight: 700; }
.status { display: flex; align-items: center; color: #222; }
.status svg:nth-child(1) { margin-right: 36px; }
.status svg:nth-child(2) { margin-right: 37px; }
.status svg:nth-child(3) { margin-right: 40px; }
.status svg:nth-child(4) { margin-right: 40px; }
.status svg:nth-child(5) { margin-right: 37px; }
.status svg:nth-child(6) { margin-right: 31px; }
.clock { width: 232px; font-size: 26px; letter-spacing: .35px; }

/* browser window */
.window {
  height: 1708px;
  flex: none;
  display: flex;
  flex-direction: column;
  border-radius: 22px;
  overflow: hidden;
  background: #3e343b;
  box-shadow: 0 0 0 30px #070b0f;
  border-top: 4px solid #6f676d;
  color: #fff;
  font-size: 24px;
}
.tabstrip { height: 78px; flex: none; display: flex; padding-top: 10px; }
.lights { display: flex; gap: 16px; padding: 17px 0 0 42px; width: 200px; }
.lights i { width: 24px; height: 24px; border-radius: 50%; }
.red { background: #ec6a5e; }
.amber { background: #f4bf4f; }
.lime { background: #61c554; }
.tabs { display: flex; }
.tab {
  position: relative;
  width: 230px;
  height: 56px;
  display: flex;
  align-items: center;
}
.tab.narrow { width: 228px; }
.tab svg { width: 32px; height: 32px; margin-right: 16px; }
.tab svg.x { width: 18px; height: 18px; margin: 0; }
.tab span {
  width: 98px;
  margin-right: 15px;
  overflow: hidden;
  white-space: nowrap;
  line-height: 32px;
  -webkit-mask-image: linear-gradient(90deg, #000 52%, transparent 92%);
  mask-image: linear-gradient(90deg, #000 52%, transparent 92%);
}
.tab.narrow span, .tab.active span { width: 96px; }
.tab:first-child span { -webkit-mask-image: none; mask-image: none; }
.tab::after {
  content: "";
  position: absolute;
  left: 207px;
  top: 13px;
  width: 4px;
  height: 32px;
  border-radius: 2px;
  background: #5e525b;
}
.narrow::after { left: 206px; }
.tab.last::after { display: none; }
.tab.active {
  height: 68px;
  width: 216px;
  margin-left: -16px;
  padding: 0 0 12px 16px;
  border-radius: 20px 20px 0 0;
  background: #5e525b;
}
.tab.active::before, .tab.active::after {
  content: "";
  position: absolute;
  top: auto;
  bottom: 0;
  width: 24px;
  height: 24px;
  border-radius: 0;
}
.tab.active::before { left: -24px; background: radial-gradient(circle at 0 0, #3e343b 23.5px, #5e525b 24px); }
.tab.active::after { left: 216px; background: radial-gradient(circle at 24px 0, #3e343b 23.5px, #5e525b 24px); }
.plus { width: 22px; height: 22px; margin: 17px 0 0 29px; }
.tab-search {
  width: 56px;
  height: 56px;
  margin-left: auto;
  margin-right: 12px;
  border-radius: 20px;
  background: #5e525b;
  display: grid;
  place-items: center;
}
.toolbar {
  height: 80px;
  flex: none;
  display: flex;
  align-items: center;
  padding: 12px 41px 0 32px;
  background: #5e525b;
  border-radius: 20px 20px 0 0;
}
.tb { width: 24px; height: 24px; margin-right: 48px; }
.omnibox {
  width: 2280px;
  height: 68px;
  margin-left: -8px;
  border-radius: 34px;
  background: #4c4149;
  display: flex;
  align-items: center;
  padding: 0 33px 0 10px;
}
.chip {
  width: 198px;
  height: 48px;
  border-radius: 24px;
  background: #5e525b;
  color: #e9a8a1;
  font-weight: 500;
  display: flex;
  align-items: center;
  padding-left: 16px;
  gap: 13px;
  white-space: nowrap;
}
.url { margin-left: 16px; font-size: 28px; letter-spacing: .55px; color: #b7b0b5; flex: 1; }
.url s { color: #e9a8a1; }
.url b { font-weight: 400; color: #fff; }
.star { width: 31px; height: 30px; }
.actions { display: flex; align-items: center; flex: 1; padding-left: 38px; }
.vr { width: 4px; height: 32px; border-radius: 2px; background: #40363d; }
.actions svg:nth-child(1) { margin-right: 34px; }
.actions .vr { margin-right: 38px; }
.actions svg:nth-child(3) { margin-right: 40px; }
.actions svg:nth-child(4) { margin-right: 36px; }
.actions svg:nth-child(5) { margin-right: 49px; }

.bookmarks {
  height: 82px;
  flex: none;
  display: grid;
  align-items: center;
  grid-template-columns: 142px 240px 308px 150px 308px 308px 178px 308px 308px 342px 54px 36px 236px;
  padding: 0 0 2px 24px;
  background: #5e525b;
  border-bottom: 2px solid #82757e;
  white-space: nowrap;
}
.bookmarks a { display: flex; align-items: center; gap: 12px; letter-spacing: -.05px; }
.bookmarks a svg { width: 32px; height: 32px; }
.bookmarks a:nth-child(4) { margin-right: 8px; }
.bookmarks a.tight { letter-spacing: -.25px; }
.bookmarks a:last-child { gap: 17px; }
.more { width: 20px; height: 16px; }

/* gophish page, dimmed by the modal backdrop */
.page {
  position: relative;
  flex: 1;
  display: flex;
  flex-direction: column;
  background: #808080;
  border-bottom: 2px solid #9a9a9a;
  font-family: "Noto Sans CJK JP", sans-serif;
  font-size: 28.5px;
  line-height: 40px;
}
.navbar {
  height: 106px;
  flex: none;
  display: flex;
  justify-content: space-between;
  background: #181f28;
  color: #808080;
}
.brand { display: flex; padding: 8px 0 0 30px; }
.brand span { margin: 19px 0 0 9px; font-size: 43.500px; font-weight: 700; line-height: 50px; }
.account { display: flex; height: 82px; margin: 12px 18px 0 0; border-radius: 6px; background: #2d5c4e; font-size: 27px; }
.btn-user { width: 170px; display: flex; align-items: center; gap: 5px; padding-left: 30px; border-right: 2px solid #28574a; }
.btn-out { width: 78px; display: flex; align-items: center; padding-left: 25px; }
.body { flex: 1; display: flex; }
.sidebar { width: 490px; background: #7b7b7b; border-right: 2px solid #777; padding-top: 36px; color: #111; }
.sidebar a { height: 95.2px; display: flex; justify-content: space-between; align-items: center; padding: 0 38px 4px 40px; }
.sidebar a.on { background: #181f28; color: #808080; }
.sidebar b { width: 96px; height: 36px; margin-top: 4px; border-radius: 20px; background: #3c3c3c; color: #7f7f7f; font-size: 21.5px; line-height: 34px; text-align: center; }
.sidebar hr { margin: 39px 0; border: 0; border-top: 2px solid #777; }
.sidebar hr ~ a { padding-bottom: 0; }
.content { flex: 1; padding: 0 51px 0 50px; }
h1 {
  margin: 0;
  height: 198px;
  padding-top: 30px;
  font: 700 121px/140px Roboto, sans-serif;
  color: #161f28;
  border-bottom: 2px solid #727272;
}
.new-btn {
  width: 276px;
  height: 82px;
  margin-top: 60px;
  padding-left: 30px;
  border-radius: 6px;
  background: #2d5c4e;
  color: #808080;
  display: flex;
  align-items: center;
  gap: 5px;
  font-size: 27px;
  white-space: nowrap;
}
.nav-tabs { margin: 55px 28px 0 30px; height: 90px; border-bottom: 2px solid #6e6e6e; }
.nav-tabs span { display: block; width: 300px; height: 90px; padding: 21px 30px 0; border: 2px solid #6c6c6c; border-bottom: 0; border-radius: 8px 8px 0 0; background: #808080; color: #2f2f2f; white-space: nowrap; }
.alert { margin-top: 111px; height: 118px; padding: 36px 30px; border: 2px solid #5f7479; border-radius: 8px; background: #6b747b; color: #1c3a4b; }

.modal {
  position: absolute;
  left: 772px;
  top: 0;
  width: 1396px;
  bottom: -2px;
  border-radius: 0 0 12px 12px;
  background: #fff;
  box-shadow: 0 10px 30px rgba(0, 0, 0, .5);
  clip-path: inset(0 -60px 0 -60px);
  color: #2c3e50;
  font-size: 26.9px;
}
.modal h4 {
  display: flex;
  align-items: flex-end;
  margin: 0;
  height: 75px;
  padding: 0 0 39px 30px;
  border-bottom: 2px solid #e5e5e5;
  font: 700 58px/60px Roboto, sans-serif;
}
.form { padding: 30px 30px 0; height: 1246px; }
label { display: flex; align-items: center; gap: 6px; height: 82px; padding-bottom: 10px; }
label svg { width: 26px; height: 26px; }
.input {
  height: 84px;
  display: flex;
  align-items: center;
  justify-content: space-between;
  padding: 0 23px 0 24px;
  border: 2px solid #bdc3c7;
  border-radius: 12px;
}
.input.filled { background: #e8eefd; color: #000; }
.input.select { border-color: #ccc; border-radius: 8px; color: #555; box-shadow: inset 0 2px 2px rgba(0, 0, 0, .075); padding: 0 22px 5px 24px; }
.caret { margin-top: 4px; border: 8px solid transparent; border-top: 9px solid #999; border-bottom: 0; }
.cols { display: grid; grid-template-columns: 1fr 1fr; gap: 60px; }
.group { display: flex; }
.input.select.joined { flex: 1; border-right: 0; border-radius: 8px 0 0 8px; padding-right: 19px; }
.test { width: 297px; height: 84px; border: 2px solid #bdc3c7; border-left: 0; border-radius: 0 8px 8px 0; color: #bdc3c7; display: flex; align-items: center; gap: 6px; padding: 0 0 1px 31px; white-space: nowrap; font-size: 27px; }
.multi { height: 68px; display: flex; align-items: center; padding-left: 12px; border: 2px solid #78ace6; border-radius: 8px; box-shadow: 0 0 16px rgba(102, 160, 233, .5), inset 0 2px 2px rgba(0, 0, 0, .075); color: #555; }
.tag { display: flex; align-items: center; gap: 4px; width: 233px; height: 44px; padding-left: 12px; border: 2px solid #ccc; border-radius: 8px; font-size: 25px; white-space: nowrap; line-height: 38px; }
.tag b { width: 16px; color: #999; font: 700 25px/38px "Open Sans", sans-serif; text-align: center; }
.cursor { width: 2px; height: 38px; margin-left: 25px; background: #333; }
.footer { height: 143px; border-top: 2px solid #e5e5e5; padding: 30px 30px 0; display: flex; justify-content: flex-end; gap: 16px; color: #fff; font-size: 27px; }
.close, .launch { height: 82px; border-radius: 6px; display: flex; align-items: center; white-space: nowrap; padding-bottom: 1px; }
.close { width: 129px; justify-content: center; background: #bdc3c7; }
.launch { width: 320px; padding-left: 30px; gap: 6px; background: #5ab99e; }
.dock-shade { position: absolute; left: 150px; right: 150px; bottom: -2px; height: 110px; background: linear-gradient(transparent, rgba(0, 0, 0, .11)); -webkit-mask-image: linear-gradient(90deg, transparent, #000 300px, #000 2340px, transparent); mask-image: linear-gradient(90deg, transparent, #000 300px, #000 2340px, transparent); }

/* dock */
.desk { flex: 1; padding: 6px 267px 0; position: relative; }
.dock {
  position: relative;
  height: 116px;
  border: 2px solid rgba(140, 160, 180, .4);
  border-radius: 38px;
  padding: 15px 13px 0 14px;
  display: flex;
  gap: 22px;
  background: linear-gradient(90deg, #243240 0, #24364f 100px, #25354f 700px, #1f2f47 1400px, #1e2d48 1780px, #1a2129 1980px, #1a1f24 2406px);
}
.app { position: relative; width: 76px; height: 76px; }
.app svg { width: 76px; height: 76px; overflow: visible; }
.petals ellipse { mix-blend-mode: multiply; opacity: .9; }
.run::after { content: ""; position: absolute; left: 33px; top: 87px; width: 8px; height: 8px; border-radius: 50%; background: #a6b4cb; }
.app em { position: absolute; right: -11px; top: -9px; width: 36px; height: 36px; border-radius: 50%; background: #e0503f; color: #fff; font: 24px/36px Inter, sans-serif; text-align: center; }
.dock-sep { width: 2px; height: 84px; margin: 0 9px 0 11px; background: #565b60; }
.dock-sep + .app svg { margin-top: -6px; height: 86px; }
```
